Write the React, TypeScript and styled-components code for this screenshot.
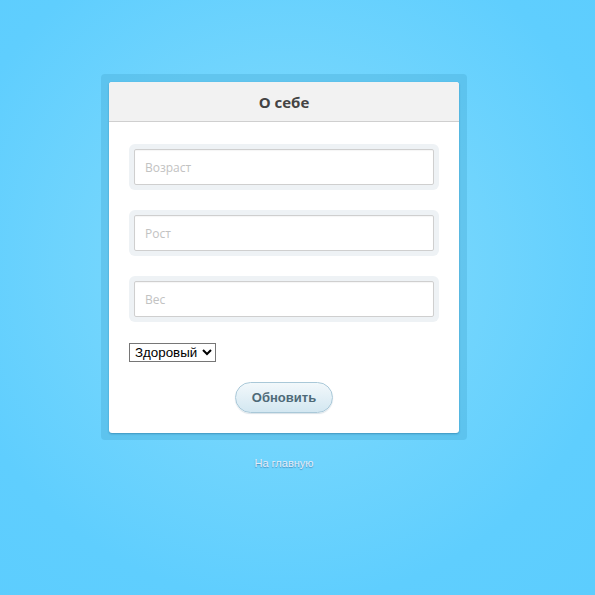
import React from "react";
import styled, { createGlobalStyle } from "styled-components";

const Global = createGlobalStyle`
  html, body { margin: 0; padding: 0; }
  body {
    min-height: 595px;
    background: radial-gradient(circle at 284px 260px, #86dcfc 0%, #72d5fd 40%, #5fcefe 75%, #5ccdfe 100%);
    font-family: "Open Sans", "Liberation Sans", sans-serif;
  }
`;

const Page = styled.div`
  min-height: 595px;
  padding: 74px 0 0 101px;
  box-sizing: border-box;
`;

const Column = styled.div`
  width: 366px;
  display: flex;
  flex-direction: column;
  align-items: stretch;
`;

const Frame = styled.div`
  background: rgba(70, 170, 210, 0.35);
  border-radius: 4px;
  padding: 8px 8px 7px 8px;
`;

const Card = styled.div`
  background: #ffffff;
  border-radius: 3px;
  overflow: hidden;
  box-shadow: 0 1px 2px rgba(0, 60, 100, 0.35);
`;

const Header = styled.div`
  height: 39px;
  background: #f2f2f2;
  border-bottom: 1px solid #cfcfcf;
  display: flex;
  align-items: center;
  justify-content: center;
`;

const Title = styled.h2`
  margin: 0;
  font-family: "Open Sans", sans-serif;
  font-size: 15px;
  font-weight: 700;
  color: #444;
`;

const Body = styled.form`
  padding: 22px 20px 20px 20px;
  display: flex;
  flex-direction: column;
`;

const FieldWrap = styled.div`
  background: #eef2f5;
  border-radius: 6px;
  padding: 5px;
  margin-bottom: 20px;
`;

const Input = styled.input`
  display: block;
  width: 100%;
  height: 36px;
  box-sizing: border-box;
  border: 1px solid #cfcfcf;
  border-radius: 2px;
  padding: 0 10px;
  font-family: "Open Sans", sans-serif;
  font-size: 12px;
  color: #333;
  background: #fff;
  box-shadow: inset 0 1px 1px rgba(0,0,0,0.04);
  outline: none;
  &::placeholder { color: #c2c2c2; }
`;

const Select = styled.select`
  align-self: flex-start;
  margin-top: 1px;
  height: 19px;
  font-family: "Liberation Sans", Arial, sans-serif;
  font-size: 13.33px;
  color: #000;
  border: 1px solid #767676;
  border-radius: 0;
  background: #fff;
  padding: 0 1px;
`;

const ButtonRow = styled.div`
  display: flex;
  justify-content: center;
  margin-top: 20px;
`;

const Button = styled.button`
  width: 98px;
  height: 31px;
  border-radius: 16px;
  border: 1px solid #a9c8d8;
  background: linear-gradient(#f2f8fb, #d3e7f1);
  box-shadow: 0 1px 1px rgba(0, 60, 100, 0.15);
  font-family: "Liberation Sans", Arial, sans-serif;
  font-weight: 700;
  font-size: 13px;
  color: #4e6a78;
  cursor: pointer;
`;

const HomeLink = styled.a`
  align-self: center;
  margin-top: 17px;
  font-family: "Liberation Sans", Arial, sans-serif;
  font-size: 11px;
  color: #e4ecf8;
  text-decoration: none;
  text-shadow: 0 1px 1px rgba(40, 90, 140, 0.55);
`;

export default function App() {
  return (
    <>
      <Global />
      <Page>
        <Column>
          <Frame>
            <Card>
              <Header>
                <Title>О себе</Title>
              </Header>
              <Body onSubmit={(e) => e.preventDefault()}>
                <FieldWrap>
                  <Input placeholder="Возраст" />
                </FieldWrap>
                <FieldWrap>
                  <Input placeholder="Рост" />
                </FieldWrap>
                <FieldWrap>
                  <Input placeholder="Вес" />
                </FieldWrap>
                <Select defaultValue="healthy">
                  <option value="healthy">Здоровый</option>
                  <option value="sick">Больной</option>
                </Select>
                <ButtonRow>
                  <Button type="submit">Обновить</Button>
                </ButtonRow>
              </Body>
            </Card>
          </Frame>
          <HomeLink href="#">На главную</HomeLink>
        </Column>
      </Page>
    </>
  );
}
